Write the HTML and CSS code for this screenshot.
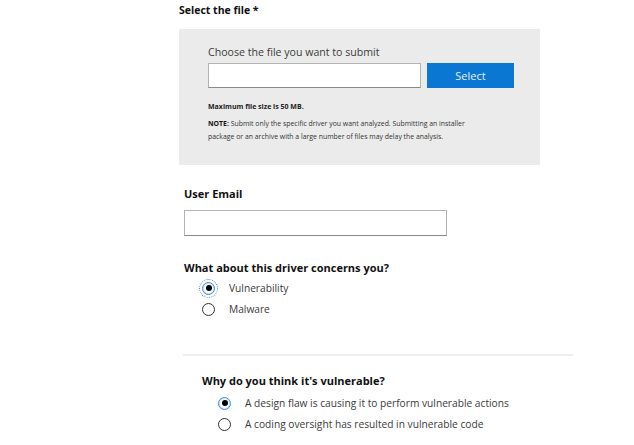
FILE: index.html
```html
<!DOCTYPE html>
<html>
<head>
<meta charset="utf-8">
<link rel="stylesheet" href="styles.css">
</head>
<body>
<div class="page">
  <div class="label title">Select the file *</div>
  <div class="filebox">
    <div class="choose">Choose the file you want to submit</div>
    <div class="filerow">
      <div class="field file-field"></div>
      <button class="select-btn">Select</button>
    </div>
    <div class="maxsize">Maximum file size is 50 MB.</div>
    <div class="note"><b>NOTE:</b> Submit only the specific driver you want analyzed. Submitting an installer<br>package or an archive with a large number of files may delay the analysis.</div>
  </div>

  <div class="section email">
    <div class="label">User Email</div>
    <div class="field email-field"></div>
  </div>

  <div class="section concern">
    <div class="label">What about this driver concerns you?</div>
    <div class="options">
      <div class="option"><span class="radio checked focus"></span><span>Vulnerability</span></div>
      <div class="option"><span class="radio"></span><span>Malware</span></div>
    </div>
  </div>

  <div class="divider"></div>

  <div class="section why">
    <div class="label">Why do you think it's vulnerable?</div>
    <div class="options wide">
      <div class="option"><span class="radio checked"></span><span>A design flaw is causing it to perform vulnerable actions</span></div>
      <div class="option"><span class="radio"></span><span>A coding oversight has resulted in vulnerable code</span></div>
    </div>
  </div>
</div>
</body>
</html>
```

FILE: styles.css
```css
html, body {
  margin: 0;
  padding: 0;
  background: #ffffff;
}
body {
  font-family: "Open Sans", "Noto Sans", "Liberation Sans", sans-serif;
  color: #1a1a1a;
  width: 634px;
  height: 445px;
  overflow: hidden;
}
.page {
  padding: 2px 0 0 179px;
}
.label {
  font-weight: 700;
  font-size: 11px;
  line-height: 16px;
  color: #111;
}
.title {
  font-size: 10.5px;
  margin-bottom: 11px;
}
.filebox {
  width: 361px;
  height: 136px;
  box-sizing: border-box;
  background: #ebebeb;
  padding: 15px 0 0 29px;
}
.choose {
  font-size: 10.6px;
  line-height: 16px;
  color: #3b3b3b;
  margin-bottom: 3px;
}
.filerow {
  display: flex;
  gap: 6px;
  align-items: stretch;
}
.field {
  background: #fff;
  border: 1px solid #b3b3b3;
  border-bottom-color: #8a8a8a;
  box-sizing: border-box;
}
.file-field {
  width: 213px;
  height: 25px;
}
.select-btn {
  width: 87px;
  height: 25px;
  border: none;
  background: #0a78d2;
  color: #e6f0fa;
  font-family: inherit;
  font-size: 11px;
  line-height: 25px;
  padding: 0;
}
.maxsize {
  font-size: 7px;
  font-weight: 700;
  line-height: 10px;
  margin-top: 14px;
  color: #222;
}
.note {
  font-size: 6.9px;
  line-height: 13px;
  margin-top: 5px;
  color: #333;
}
.note b {
  color: #111;
}
.section.email {
  margin: 21px 0 0 5px;
}
.email .label {
  margin-bottom: 8px;
}
.email-field {
  width: 263px;
  height: 26px;
}
.section.concern {
  margin: 24px 0 0 5px;
}
.options {
  padding-left: 18px;
  margin-top: 5px;
  display: flex;
  flex-direction: column;
  gap: 7px;
}
.option {
  display: flex;
  align-items: center;
  gap: 14px;
  font-size: 10.2px;
  line-height: 14px;
  color: #3a3a3a;
}
.radio {
  width: 13px;
  height: 13px;
  border-radius: 50%;
  border: 1px solid #333;
  box-sizing: border-box;
  position: relative;
  flex: none;
}
.radio.checked {
  border: 1px solid #3a8ee0;
  box-shadow: inset 0 0 0 1px #cfe3f7;
}
.radio.checked::after {
  content: "";
  position: absolute;
  left: 2.5px;
  top: 2.5px;
  width: 6px;
  height: 6px;
  border-radius: 50%;
  background: #000;
}
.radio.focus {
  outline: 1px dotted #6b8bb0;
  outline-offset: 2px;
}
.divider {
  margin: 38px 0 0 4px;
  width: 390px;
  height: 2px;
  background: #eeeeee;
}
.section.why {
  margin: 17px 0 0 23px;
}
.options.wide {
  padding-left: 16px;
  margin-top: 7px;
}
.options.wide .option {
  gap: 14px;
}
```
